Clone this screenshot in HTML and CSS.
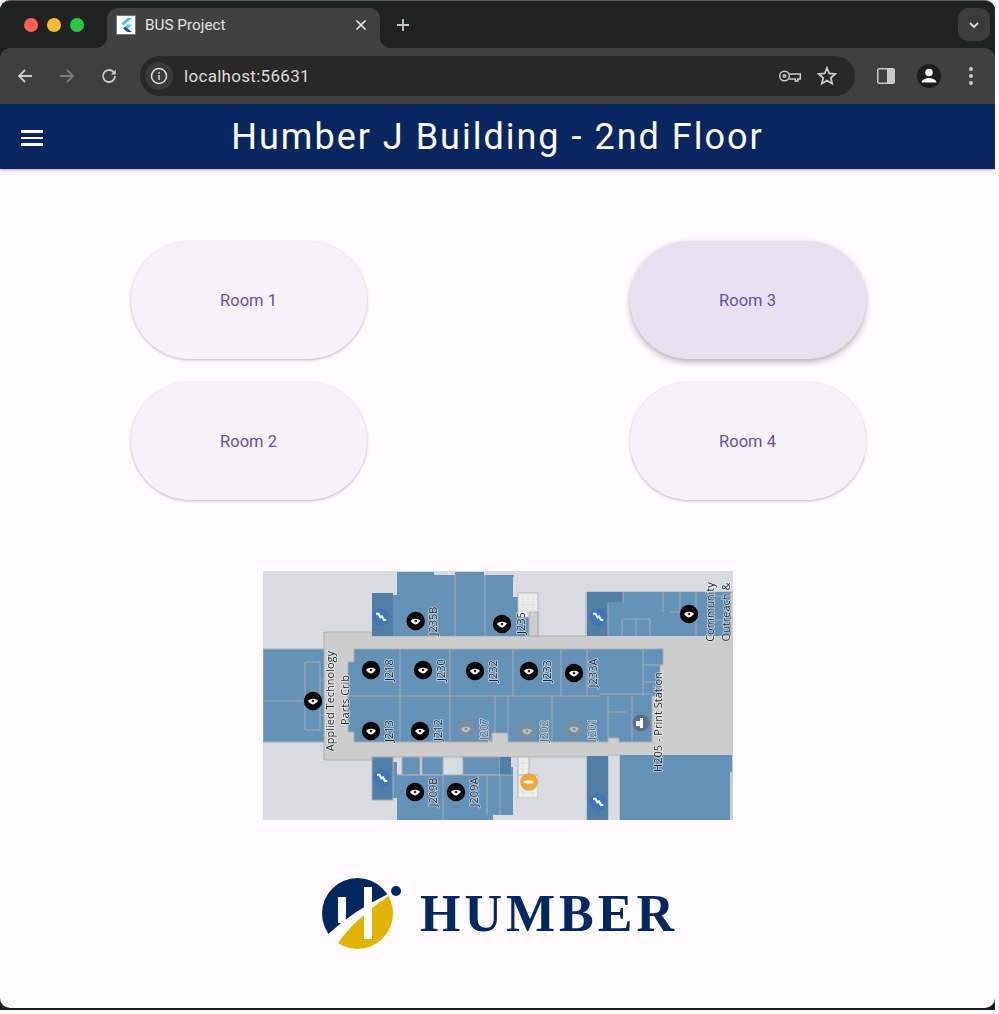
FILE: index.html
```html
<!DOCTYPE html>
<html lang="en">
<head>
<meta charset="utf-8">
<title>BUS Project</title>
<link rel="stylesheet" href="styles.css">
</head>
<body>
<div class="window">
  <div class="tabstrip">
    <div class="lights"><span class="light red"></span><span class="light yellow"></span><span class="light green"></span></div>
    <div class="tab">
      <span class="favicon"><svg viewBox="0 0 20 20" width="20" height="20"><path d="M11.500 3h4.500L7.500 10.500 5.300 8.600z" fill="#47c5fb"/><path d="M11.500 9.500H16l-4.500 4-2.300-1.900z" fill="#47c5fb"/><path d="M9.200 11.600l2.300 1.900L16 17h-4.500l-4.400-3.600z" fill="#00569e"/></svg></span>
      <span class="tabtitle">BUS Project</span>
      <svg class="tabclose" viewBox="0 0 12 12" width="12" height="12"><path d="M1.500 1.500l9 9M10.500 1.500l-9 9"/></svg>
    </div>
    <svg class="newtab" viewBox="0 0 14 14" width="14" height="14"><path d="M7 1v12M1 7h12"/></svg>
    <div class="tabmenu"><svg viewBox="0 0 12 12" width="12" height="12"><path d="M2 4l4 4 4-4"/></svg></div>
  </div>
  <div class="toolbar">
    <svg class="navicon" viewBox="0 0 18 18" width="18" height="18"><path d="M16 9H3M9 3L3 9l6 6"/></svg>
    <svg class="navicon dim" viewBox="0 0 18 18" width="18" height="18"><path d="M2 9h13M9 3l6 6-6 6"/></svg>
    <svg class="navicon" viewBox="0 0 18 18" width="18" height="18"><path d="M15 9a6 6 0 1 1-1.800-4.300L15 6.500"/><path class="solid" d="M15.800 2.500v5h-5z"/></svg>
    <div class="omnibox">
      <span class="infobtn"><svg viewBox="0 0 18 18" width="18" height="18"><circle cx="9" cy="9" r="7.500"/><path d="M9 8v5M9 5v1.800"/></svg></span>
      <span class="url">localhost:56631</span>
      <svg class="omniicon key" viewBox="0 0 24 14" width="24" height="14"><circle cx="6.500" cy="7" r="4.800"/><circle cx="6.500" cy="7" r="1.300"/><path d="M11.300 5h11v5h-2.500v2h-2.500v-2h-6"/></svg>
      <svg class="omniicon star" viewBox="0 0 20 20" width="20" height="20"><path d="M10 2l2.300 5.500 6 .5-4.500 3.900 1.400 5.800L10 14.600l-5.200 3.100 1.400-5.800L1.700 8l6-.5z"/></svg>
    </div>
    <svg class="sidepanel" viewBox="0 0 18 16" width="18" height="16"><rect x="0.750" y="0.750" width="16.500" height="14.500" rx="1.500"/><rect class="fill" x="10" y="1" width="7" height="14"/></svg>
    <span class="avatar"><svg viewBox="0 0 24 24" width="24" height="24"><circle cx="12" cy="8.500" r="3.800"/><path d="M4.500 18.500c0-3 5-4.500 7.500-4.500s7.500 1.500 7.500 4.500z"/></svg></span>
    <span class="kebab"><i></i><i></i><i></i></span>
  </div>
  <div class="page">
    <header class="appbar">
      <span class="burger"><i></i><i></i><i></i></span>
      <h1>Humber J Building - 2nd Floor</h1>
    </header>
    <main class="content">
      <section class="rooms">
        <button class="room">Room 1</button>
        <button class="room hover">Room 3</button>
        <button class="room">Room 2</button>
        <button class="room">Room 4</button>
      </section>
      <svg class="map" viewBox="263 571 470 249" width="470" height="249">
        <defs>
          <g id="pin"><circle r="9.200" fill="#000"/><path d="M-5 0C-3-2.800 2-3.200 5-.3 2.500 2.500 1 3.300 0 3.600-1.500 3.300-3.300 2.200-5 0z" fill="#fff"/><circle r="1.300" fill="#222"/></g>
          <g id="pinfade"><circle r="9" fill="#7b8c9c"/><path d="M-5 0C-3-2.800 2-3.200 5-.3 2.500 2.500 1 3.300 0 3.600-1.500 3.300-3.300 2.200-5 0z" fill="#b4bfc9"/><circle r="1.300" fill="#7b8c9c"/></g>
          <g id="stairs"><circle r="8.800" fill="#3f78b8"/><path d="M-5-3.200H-2.600L-.6.300 1-.6 3 3H5.200" fill="none" stroke="#fff" stroke-width="2"/></g>
        </defs>
        <rect class="ground" x="263" y="571" width="470" height="249"/>
        <path class="hall" d="M324 632H372V636H537V612H538V636H586V592H740V826H620V755H608V826H587V757H372V760H324Z"/>
        <path class="room-shape" d="M397 572H434V575H455V572H484V575H514V577H513V597H518V612H529V636H393V595H397Z"/>
        <path class="line" d="M455 575V636M485 575V636"/>
        <rect class="stair" x="372" y="593" width="21" height="43"/>
        <rect class="tile" x="518" y="593" width="20" height="24"/>
        <rect class="hall" x="529" y="612" width="9" height="24"/>
        <path class="tilegrid" d="M523 593V617M528 593V617M533 593V617M518 599H538M518 605H538M518 611H538"/>
        <path class="room-shape" d="M587 592H731V636H587Z"/>
        <path class="stair" d="M587 592H623V602H608V636H587Z"/>
        <path class="line" d="M608 603V636M623 592V603M663 592V612M680 592V612M696 592V636M623 619H650M622 619V636M636 619V636M650 619V636M708 610V636M669 612H680M715 596H731M715 620H731"/>
        <rect class="room-shape wall" x="263" y="649" width="61" height="93"/>
        <path class="line" d="M263 701H324M305 662H320V730H305ZM320 680H324M320 715H324"/>
        <path class="room-shape wall" d="M354 649H663V665H660V696H652V742H619V738H608V742H508V733H492V742H354V732H348V662H354Z"/>
        <path class="line" d="M348 696H600M600 694H652M400 649V742M450 649V742M513 649V696M561 649V696M587 649V696M643 649V696M643 665H663M643 682H656M495 696V733M508 696V733M552 696V742M608 696V738M632 696V742M608 712H627"/>
        <path class="room-shape" d="M393 762H397V775H513V767H500V757H463V775H513V815H493V820H397V798H393Z"/>
        <rect class="room-shape wall" x="402" y="757" width="18" height="18"/>
        <rect class="room-shape wall" x="422" y="757" width="21" height="18"/>
        <rect class="room-shape wall" x="463" y="757" width="37" height="18"/>
        <rect class="stair" x="500" y="757" width="11" height="18"/>
        <path class="line" d="M443 775V820M487 775V815M500 775V815M397 775H513"/>
        <rect class="stair wall" x="372" y="757" width="21" height="43"/>
        <rect class="tile" x="518" y="757" width="11" height="18"/>
        <rect class="tile" x="518" y="775" width="20" height="23"/>
        <path class="tilegrid" d="M523 757V798M533 775V798M518 763H529M518 769H529M518 781H538M518 787H538M518 793H538"/>
        <path class="ground" d="M538 760H586V820H513V798H538Z"/>
        <rect class="stair" x="587" y="756" width="21" height="64"/>
        <path class="room-shape" d="M620 755H732V772H730V820H620Z"/>
        <g class="labels">
          <text transform="rotate(-90 432 621)" x="432" y="621">J235B</text>
          <text transform="rotate(-90 520 623)" x="520" y="623">J235</text>
          <text transform="rotate(-90 388 670)" x="388" y="670">J218</text>
          <text transform="rotate(-90 440 670)" x="440" y="670">J230</text>
          <text transform="rotate(-90 492 671)" x="492" y="671">J232</text>
          <text transform="rotate(-90 546 671)" x="546" y="671">J233</text>
          <text transform="rotate(-90 592 673)" x="592" y="673">J233A</text>
          <text transform="rotate(-90 388 731)" x="388" y="731">J213</text>
          <text transform="rotate(-90 437 730)" x="437" y="730">J212</text>
          <text class="pale" transform="rotate(-90 483 729)" x="483" y="729">J207</text>
          <text class="pale" transform="rotate(-90 543 731)" x="543" y="731">J202</text>
          <text class="pale" transform="rotate(-90 591 729)" x="591" y="729">J201</text>
          <text transform="rotate(-90 432 792)" x="432" y="792">J209B</text>
          <text transform="rotate(-90 473 792)" x="473" y="792">J209A</text>
          <text transform="rotate(-90 329 701)" x="329" y="701">Applied Technology</text>
          <text transform="rotate(-90 344 700)" x="344" y="700">Parts Crib</text>
          <text transform="rotate(-90 657 722)" x="657" y="722">H205 - Print Station</text>
          <text transform="rotate(-90 709 612)" x="709" y="612">Community</text>
          <text transform="rotate(-90 725 612)" x="725" y="612">Outreach &amp;</text>
        </g>
        <use href="#pin" x="415.700" y="621"/>
        <use href="#pin" x="502" y="624"/>
        <use href="#pin" x="689" y="614"/>
        <use href="#pin" x="371" y="670"/>
        <use href="#pin" x="423" y="670"/>
        <use href="#pin" x="475" y="671"/>
        <use href="#pin" x="529" y="671"/>
        <use href="#pin" x="574" y="673"/>
        <use href="#pin" x="313" y="701"/>
        <use href="#pin" x="371" y="731"/>
        <use href="#pin" x="420" y="731"/>
        <use href="#pin" x="415" y="792"/>
        <use href="#pin" x="456" y="792"/>
        <use href="#pinfade" x="466" y="729"/>
        <use href="#pinfade" x="527" y="731"/>
        <use href="#pinfade" x="574" y="729"/>
        <use href="#stairs" x="381" y="617"/>
        <use href="#stairs" x="598" y="617"/>
        <use href="#stairs" x="382" y="778"/>
        <use href="#stairs" x="598" y="802"/>
        <circle cx="641" cy="723" r="8.500" fill="#5d6f84"/>
        <path d="M640 718h3v10h-3zM636 721h4v5h-4z" fill="#fff"/>
        <circle cx="529" cy="782" r="8.800" fill="#eaa93a"/>
        <path d="M523 782l3-1.500h6l2 1.500-2 1.500h-6z" fill="#fff"/>
      </svg>
      <div class="logo">
        <svg viewBox="0 0 80 72" width="80" height="72">
          <defs><clipPath id="disc"><circle cx="35.500" cy="35.500" r="35.500"/></clipPath></defs>
          <g clip-path="url(#disc)">
            <path fill="#03275f" d="M6.300 56Q31 33 66 16V-5H-5V56Z"/>
            <path fill="#e0b400" d="M16 65Q31 43 66 18H80V80H16Z"/>
          </g>
          <rect x="16" y="19" width="8" height="26" fill="#fff"/>
          <rect x="42" y="9" width="8" height="52" fill="#fff"/>
          <circle cx="74" cy="13" r="5" fill="#03275f"/>
        </svg>
        <span class="wordmark">HUMBER</span>
      </div>
    </main>
  </div>
</div>
</body>
</html>
```
FILE: styles.css
```css
* { box-sizing: border-box; }
html, body { margin: 0; padding: 0; background: #fffbfe; }
.window {
  width: 995px;
  height: 1010px;
  background: #1c1c1c;
  border-radius: 10px 10px 0 0;
  border-top: 1px solid #5b5b5b;
  overflow: hidden;
  display: flex;
  flex-direction: column;
  font-family: Roboto, "Liberation Sans", sans-serif;
}
.tabstrip {
  height: 47px;
  flex: none;
  background: #202221;
  display: flex;
  align-items: flex-end;
  padding: 0 5px 0 24px;
}
.lights { display: flex; gap: 9px; align-self: flex-start; margin-top: 17px; width: 83px; }
.light { width: 14px; height: 14px; border-radius: 50%; }
.red { background: #fe5f57; }
.yellow { background: #febb2e; }
.green { background: #28c840; }
.tab {
  position: relative;
  width: 273px;
  height: 40px;
  background: #414141;
  border-radius: 11px 11px 0 0;
  display: flex;
  align-items: center;
  padding: 0 13px 6px 9px;
}
.tab::before, .tab::after {
  content: "";
  position: absolute;
  bottom: 0;
  width: 10px;
  height: 10px;
  background: radial-gradient(circle at var(--c) 0, #202221 9.500px, #414141 10px);
}
.tab::before { left: -10px; --c: 0; }
.tab::after { right: -10px; --c: 100%; }
.favicon { width: 20px; height: 20px; background: #fff; display: flex; border: 1px solid #777; }
.favicon svg { margin: -1px; }
.tabtitle { margin-left: 9px; color: #e1e3e1; font-size: 15.300px; flex: 1; }
.tabclose { fill: none; stroke: #e6e6e6; stroke-width: 1.700; }
.newtab { fill: none; stroke: #c7c7c7; stroke-width: 1.800; margin: 0 0 16px 16px; }
.tabmenu {
  margin: 0 0 7px auto;
  width: 32px;
  height: 33px;
  background: #3c3c3c;
  border-radius: 10px;
  display: flex;
  align-items: center;
  justify-content: center;
}
.tabmenu svg { fill: none; stroke: #dcdcdc; stroke-width: 1.800; }
.toolbar {
  height: 56px;
  flex: none;
  background: #3f3f3f;
  border-radius: 10px 10px 0 0;
  display: flex;
  align-items: center;
  padding: 0 15px 0 16px;
}
.navicon { fill: none; stroke: #c9c9c9; stroke-width: 1.800; margin-right: 24px; }
.navicon.dim { stroke: #7c7c7c; }
.navicon .solid { fill: #c9c9c9; stroke: none; }
.omnibox {
  width: 715px;
  height: 40px;
  margin-left: -2px;
  border-radius: 20px;
  background: #282828;
  display: flex;
  align-items: center;
  padding: 0 18px 1px 5px;
  flex: none;
}
.infobtn {
  width: 28px;
  height: 28px;
  border-radius: 50%;
  background: #3a3a3a;
  display: flex;
  align-items: center;
  justify-content: center;
}
.infobtn svg { fill: none; stroke: #dedede; stroke-width: 1.500; }
.url { color: #dcdcdc; font-size: 17px; margin-left: 11px; flex: 1; letter-spacing: .3px; }
.omniicon { fill: none; stroke: #c9c9c9; stroke-width: 1.500; }
.omniicon.star { margin-left: 15px; stroke-width: 1.800; }
.sidepanel { margin-left: 22px; fill: none; stroke: #c9c9c9; stroke-width: 1.500; flex: none; }
.sidepanel .fill { fill: #c9c9c9; stroke: none; }
.avatar {
  margin-left: 22px;
  width: 24px;
  height: 24px;
  border-radius: 50%;
  background: #1c1c1c;
  fill: #f2f2f2;
  flex: none;
}
.avatar svg { display: block; }
.kebab { margin-left: 28px; display: flex; flex-direction: column; gap: 3px; }
.kebab i { width: 4px; height: 4px; border-radius: 50%; background: #c9c9c9; }
.page {
  flex: 1;
  margin-bottom: 2px;
  background: #fffbfe;
  border-radius: 0 0 10px 10px;
  overflow: hidden;
  display: flex;
  flex-direction: column;
}
.appbar {
  position: relative;
  height: 65px;
  flex: none;
  background: #082760;
  box-shadow: 0 1px 3px rgba(0, 0, 0, .3);
  display: flex;
  align-items: center;
  justify-content: center;
}
.burger { position: absolute; left: 21px; top: 26px; display: flex; flex-direction: column; gap: 4px; }
.burger i { width: 22px; height: 2.500px; background: #fff; }
.appbar h1 { margin: 0; color: #fff; font-size: 36px; font-weight: 400; letter-spacing: 2px; }
.content { flex: 1; display: flex; flex-direction: column; align-items: center; }
.rooms {
  margin: 72px 0 0 1px;
  display: grid;
  grid-template-columns: 236px 236px;
  column-gap: 263px;
  row-gap: 23px;
}
.room {
  height: 118px;
  border: 0;
  border-radius: 59px;
  background: #f7f2f9;
  box-shadow: 0 1px 3px rgba(0, 0, 0, .28);
  color: #6750a4;
  font-family: inherit;
  font-size: 16.500px;
}
.room.hover { background: #e7e1ef; box-shadow: 0 3px 6px rgba(0, 0, 0, .3); }
.map { margin-top: 71px; display: block; filter: blur(.4px); }
.ground { fill: #d8dce0; }
.hall { fill: #cdcdcd; stroke: #b0b0b0; stroke-width: 1; }
.room-shape { fill: #6491b6; }
.room-shape.wall, .stair.wall { stroke: #a9aeb2; stroke-width: 1; }
.stair { fill: #527fa5; }
.tile { fill: #eeeeee; stroke: #b5b5b5; }
.tilegrid { fill: none; stroke: #dcdcdc; stroke-width: .8; }
.line { fill: none; stroke: #a5acb4; stroke-width: 1; }
.labels text {
  font-family: "Open Sans", sans-serif;
  font-size: 11px;
  font-weight: 500;
  fill: #1f2831;
  text-anchor: middle;
  dominant-baseline: central;
  paint-order: stroke;
  stroke: rgba(255, 255, 255, .6);
  stroke-width: 1.500px;
}
.labels text.pale { fill: #5f6b78; }
.logo { margin-top: 58px; display: flex; align-items: center; gap: 18px; margin-left: 5px; }
.logo svg { display: block; flex: none; }
.wordmark {
  font-family: "Liberation Serif", serif;
  font-weight: 700;
  font-size: 52px;
  line-height: 1;
  letter-spacing: 4px;
  color: #03275f;
}
```
